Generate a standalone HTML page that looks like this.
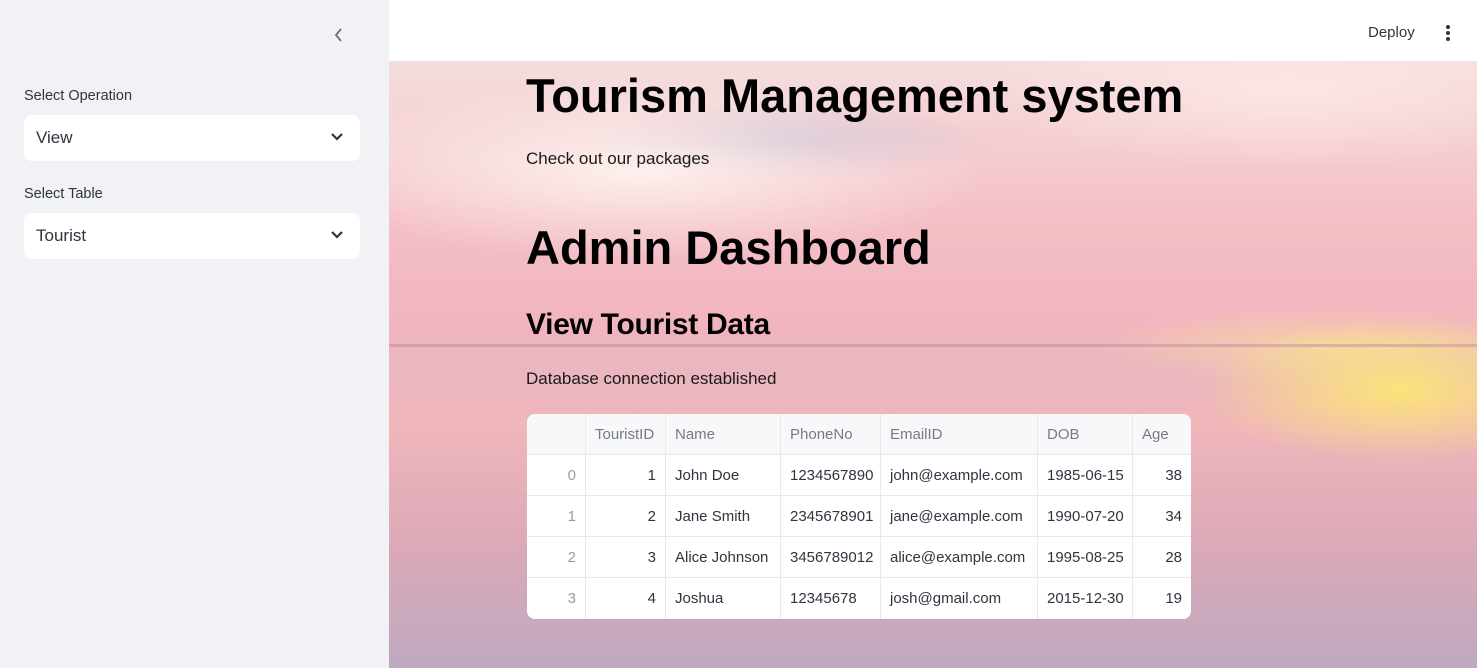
<!DOCTYPE html>
<html><head><meta charset="utf-8"><style>
*{box-sizing:border-box;margin:0;padding:0}
body{width:1477px;height:668px;overflow:hidden;font-family:"Liberation Sans",sans-serif;position:relative;background:#fff}
.sb{position:absolute;left:0;top:0;width:389px;height:668px;background:#f0f2f6}
.lbl{position:absolute;left:24px;font-size:14.5px;color:#31333f}
.sel{position:absolute;left:24px;width:336px;height:46px;background:#fff;border-radius:8px;font-size:17px;color:#31333f;padding:13px 12px}
.sel svg{position:absolute;right:16px;top:17px}
.top{position:absolute;left:389px;top:0;right:0;height:61px;background:#fff}
.main{position:absolute;left:389px;top:61px;right:0;bottom:0;overflow:hidden;
background:
radial-gradient(ellipse 200px 70px at 1010px 330px,rgba(255,236,110,.85),rgba(255,236,110,0)),
radial-gradient(ellipse 250px 40px at 950px 285px,rgba(255,240,140,.5),rgba(255,240,140,0)),
radial-gradient(ellipse 350px 90px at 250px 110px,rgba(255,250,245,.8),rgba(255,250,245,0)),
radial-gradient(ellipse 200px 40px at 400px 80px,rgba(175,170,200,.55),rgba(175,170,200,0)),
radial-gradient(ellipse 300px 80px at 900px 30px,rgba(255,235,230,.7),rgba(255,235,230,0)),
linear-gradient(180deg,#f5dede 0%,#f4c0c6 25%,#f1b4bf 45%,#eab6c0 50%,#f0b6ba 60%,#dba9b8 80%,#bea9bf 100%)}
.horizon{position:absolute;left:0;right:0;top:283px;height:3px;background:rgba(170,140,160,.45)}
h1{position:absolute;left:137px;font-weight:bold;color:#000;white-space:nowrap}
.p{position:absolute;left:137px;font-size:17px;color:#1a1a1a}
table{position:absolute;left:138px;top:353px;border-collapse:separate;border-spacing:0;background:#fff;border-radius:8px;overflow:hidden;font-size:15px;color:#31333f;table-layout:fixed;width:664px}
td{height:41px;border-right:1px solid #e8e9ec;border-bottom:1px solid #e8e9ec;padding:0 9px;white-space:nowrap;overflow:hidden}
tr td:last-child{border-right:none}
tr:last-child td{border-bottom:none}
tr.h td{background:#f7f8fa;color:#777a85}
td.r{text-align:right}
td.i{color:#9a9ca5;text-align:right}
</style></head><body>
<div class="sb">
<svg style="position:absolute;left:333px;top:28px" width="12" height="14" viewBox="0 0 12 14"><path d="M8 1L3 7l5 6" stroke="#6b6e7a" stroke-width="1.8" fill="none"/></svg>
<div class="lbl" style="top:88px">Select Operation</div>
<div class="sel" style="top:115px">View<svg width="14" height="10" viewBox="0 0 14 10"><path d="M2 2l5 5 5-5" stroke="#31333f" stroke-width="2.2" fill="none"/></svg></div>
<div class="lbl" style="top:186px">Select Table</div>
<div class="sel" style="top:213px">Tourist<svg width="14" height="10" viewBox="0 0 14 10"><path d="M2 2l5 5 5-5" stroke="#31333f" stroke-width="2.2" fill="none"/></svg></div>
</div>
<div class="top">
<div style="position:absolute;left:979px;top:24px;font-size:15px;color:#31333f">Deploy</div>
<svg style="position:absolute;left:1056px;top:24px" width="6" height="18"><circle cx="3" cy="3" r="2" fill="#31333f"/><circle cx="3" cy="9" r="2" fill="#31333f"/><circle cx="3" cy="15" r="2" fill="#31333f"/></svg>
</div>
<div class="main">
<div class="horizon"></div>
<h1 style="top:7px;font-size:47px">Tourism Management system</h1>
<div class="p" style="top:88px">Check out our packages</div>
<h1 style="top:159px;font-size:47px">Admin Dashboard</h1>
<h1 style="top:247px;font-size:30px;letter-spacing:-0.3px">View Tourist Data</h1>
<div class="p" style="top:308px">Database connection established</div>
<table>
<colgroup><col style="width:59px"><col style="width:80px"><col style="width:115px"><col style="width:100px"><col style="width:157px"><col style="width:95px"><col style="width:58px"></colgroup>
<tr class="h"><td></td><td>TouristID</td><td>Name</td><td>PhoneNo</td><td>EmailID</td><td>DOB</td><td>Age</td></tr>
<tr><td class="i">0</td><td class="r">1</td><td>John Doe</td><td>1234567890</td><td>john@example.com</td><td>1985-06-15</td><td class="r">38</td></tr>
<tr><td class="i">1</td><td class="r">2</td><td>Jane Smith</td><td>2345678901</td><td>jane@example.com</td><td>1990-07-20</td><td class="r">34</td></tr>
<tr><td class="i">2</td><td class="r">3</td><td>Alice Johnson</td><td>3456789012</td><td>alice@example.com</td><td>1995-08-25</td><td class="r">28</td></tr>
<tr><td class="i">3</td><td class="r">4</td><td>Joshua</td><td>12345678</td><td>josh@gmail.com</td><td>2015-12-30</td><td class="r">19</td></tr>
</table>
</div>
</body></html>
